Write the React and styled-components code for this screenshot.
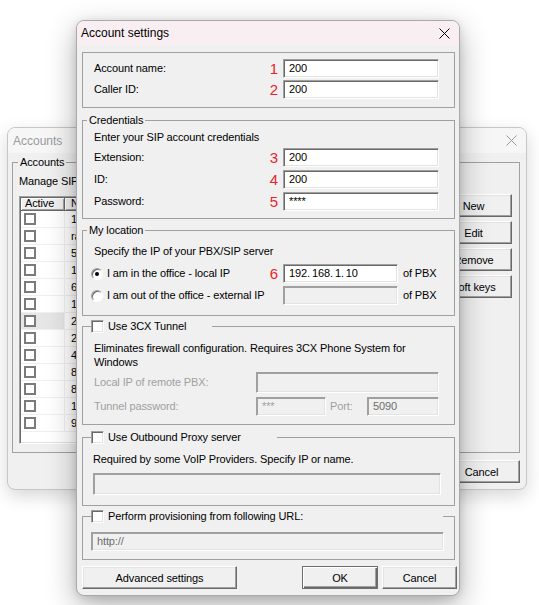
import React from "react";
import styled, { createGlobalStyle } from "styled-components";

const Global = createGlobalStyle`
  html, body { margin: 0; padding: 0; background: #fff; }
  body {
    font-family: "Liberation Sans", Arial, sans-serif;
    font-size: 11px;
    letter-spacing: -0.12px;
    color: #000;
  }
  *, *::before, *::after { box-sizing: border-box; }
`;

const Desktop = styled.div`
  position: relative;
  width: 539px;
  height: 605px;
  overflow: hidden;
  background: #fff;
`;

const Window = styled.div`
  position: absolute;
  left: ${(p) => p.$x}px;
  top: ${(p) => p.$y}px;
  width: ${(p) => p.$w}px;
  height: ${(p) => p.$h}px;
  display: flex;
  flex-direction: column;
  background: #f0f0f0;
  border: 1px solid ${(p) => (p.$active ? "#a9a9a9" : "#c6c6c6")};
  border-radius: 8px;
  overflow: hidden;
  box-shadow: ${(p) =>
    p.$active
      ? "0 10px 30px rgba(0,0,0,0.30), 0 2px 8px rgba(0,0,0,0.12)"
      : "0 6px 18px rgba(0,0,0,0.16)"};
`;

const TitleBar = styled.div`
  flex: none;
  height: ${(p) => p.$h}px;
  display: flex;
  align-items: center;
  justify-content: space-between;
  padding: 0 9px 0 ${(p) => p.$pl}px;
  background: ${(p) => (p.$active ? "#f9eef2" : "#f6f6f6")};
  color: ${(p) => (p.$active ? "#000" : "#9a9a9a")};
  font-size: 12px;
  letter-spacing: 0;
  line-height: 14px;
`;

const CloseIcon = ({ color, size }) => (
  <svg width={size} height={size} viewBox={`0 0 ${size} ${size}`} fill="none">
    <path
      d={`M0.5 0.5 L${size - 0.5} ${size - 0.5} M${size - 0.5} 0.5 L0.5 ${size - 0.5}`}
      stroke={color}
      strokeWidth="1"
    />
  </svg>
);

/* ---------- shared controls ---------- */

const Group = styled.fieldset`
  flex: none;
  margin: ${(p) => p.$mt || 0}px 0 0;
  padding: 0;
  min-width: 0;
  border: 1px solid #a0a0a0;
`;

const Legend = styled.legend`
  padding: 0 2px;
  margin-left: ${(p) => p.$ml ?? 4}px;
  height: 13px;
  line-height: 13px;
  font-size: 11px;
`;

const CheckLegend = styled.legend`
  padding: 0;
  margin-left: 8px;
  width: ${(p) => p.$w}px;
  height: 13px;
`;

const LegendInner = styled.span`
  display: flex;
  align-items: center;
  gap: 4px;
  height: 13px;
  line-height: 13px;
  white-space: nowrap;
`;

const GroupBody = styled.div`
  display: flex;
  flex-direction: column;
  padding: ${(p) => p.$p};
`;

const Text = styled.div`
  line-height: ${(p) => p.$lh || 13}px;
  color: ${(p) => (p.$disabled ? "#a0a0a0" : "#000")};
  margin-bottom: ${(p) => p.$mb || 0}px;
  padding-left: ${(p) => p.$pl || 0}px;
  white-space: nowrap;
`;

const Rows = styled.div`
  display: flex;
  flex-direction: column;
  gap: ${(p) => p.$gap}px;
`;

const FieldRow = styled.div`
  display: flex;
  align-items: center;
  height: ${(p) => p.$h || 19}px;
  margin-top: ${(p) => p.$mt || 0}px;
`;

const Label = styled.span`
  flex: 1;
  line-height: 13px;
  white-space: nowrap;
  color: ${(p) => (p.$disabled ? "#a0a0a0" : "#000")};
`;

const FixedLabel = styled.span`
  flex: none;
  width: ${(p) => p.$w}px;
  margin-left: ${(p) => p.$ml || 0}px;
  line-height: 13px;
  white-space: nowrap;
  color: ${(p) => (p.$disabled ? "#a0a0a0" : "#000")};
`;

const Num = styled.span`
  flex: none;
  margin-right: 5px;
  color: #e8232b;
  font-size: 15px;
  letter-spacing: 0;
  line-height: 15px;
`;

const Edit = styled.div`
  flex: none;
  width: ${(p) => p.$w}px;
  height: 100%;
  display: flex;
  align-items: center;
  padding-left: 5px;
  overflow: hidden;
  white-space: nowrap;
  line-height: 13px;
  background: ${(p) => (p.$disabled ? "#f0f0f0" : "#fff")};
  color: ${(p) => p.$color || "#000"};
  border: 1px solid;
  border-color: #a0a0a0 #fff #fff #a0a0a0;
  box-shadow: inset 1px 1px 0 ${(p) => (p.$disabled ? "#a0a0a0" : "#696969")},
    inset -1px -1px 0 #e3e3e3;
`;

const Dot = styled.span`
  margin-right: 2px;
`;

const CheckBox = styled.span`
  flex: none;
  width: 13px;
  height: 13px;
  background: #fff;
  border: 1px solid;
  border-color: #a0a0a0 #fff #fff #a0a0a0;
  box-shadow: inset 1px 1px 0 #696969, inset -1px -1px 0 #e3e3e3;
`;

const Radio = styled.span`
  position: relative;
  flex: none;
  width: 12px;
  height: 12px;
  margin-right: 4px;
  border-radius: 50%;
  background: #fff;
  border: 1px solid;
  border-color: #a0a0a0 #fff #fff #a0a0a0;
  box-shadow: inset 1px 1px 0 #696969;
  &::after {
    content: "";
    display: ${(p) => (p.$checked ? "block" : "none")};
    position: absolute;
    left: 3px;
    top: 3px;
    width: 4px;
    height: 4px;
    border-radius: 50%;
    background: #000;
  }
`;

const Button = styled.button`
  flex: none;
  width: ${(p) => p.$w}px;
  height: 23px;
  padding: 0;
  font-family: inherit;
  font-size: 11px;
  letter-spacing: inherit;
  color: #000;
  background: #f0f0f0;
  white-space: nowrap;
  overflow: hidden;
  border: 1px solid;
  border-color: ${(p) => (p.$default ? "#6d6d6d" : "#fff #696969 #696969 #fff")};
  box-shadow: ${(p) =>
    p.$default
      ? "inset 1px 1px 0 #fff, inset -1px -1px 0 #696969, inset -2px -2px 0 #a0a0a0"
      : "inset -1px -1px 0 #a0a0a0, inset 1px 1px 0 #e3e3e3"};
`;

/* ---------- account settings dialog ---------- */

const DialogBody = styled.div`
  flex: 1;
  display: flex;
  flex-direction: column;
  padding: 7px 4px 6px 5px;
`;

const ButtonRow = styled.div`
  display: flex;
  align-items: center;
  gap: 4px;
  margin: ${(p) => p.$mt}px ${(p) => p.$mr || 0}px 0 0;
  justify-content: ${(p) => p.$justify || "flex-start"};
`;

const Spacer = styled.span`
  flex: 1;
`;

const IpValue = ({ value }) => {
  const parts = value.split(".");
  return (
    <span>
      {parts.map((part, i) => (
        <React.Fragment key={i}>
          {part}
          {i < parts.length - 1 && <Dot>.</Dot>}
        </React.Fragment>
      ))}
    </span>
  );
};

function AccountSettings() {
  return (
    <Window $active $x={76} $y={20} $w={384} $h={576}>
      <TitleBar $active $h={24} $pl={4}>
        <span>Account settings</span>
        <CloseIcon color="#000" size={11} />
      </TitleBar>
      <DialogBody>
        <Group>
          <GroupBody $p="6px 15px 8px 11px">
            <Rows $gap={2}>
              <FieldRow>
                <Label>Account name:</Label>
                <Num>1</Num>
                <Edit $w={156}>200</Edit>
              </FieldRow>
              <FieldRow>
                <Label>Caller ID:</Label>
                <Num>2</Num>
                <Edit $w={156}>200</Edit>
              </FieldRow>
            </Rows>
          </GroupBody>
        </Group>

        <Group $mt={6}>
          <Legend>Credentials</Legend>
          <GroupBody $p="4px 15px 7px 11px">
            <Text $mb={4}>Enter your SIP account credentials</Text>
            <Rows $gap={3}>
              <FieldRow>
                <Label>Extension:</Label>
                <Num>3</Num>
                <Edit $w={156}>200</Edit>
              </FieldRow>
              <FieldRow>
                <Label>ID:</Label>
                <Num>4</Num>
                <Edit $w={156}>200</Edit>
              </FieldRow>
              <FieldRow>
                <Label>Password:</Label>
                <Num>5</Num>
                <Edit $w={156}>****</Edit>
              </FieldRow>
            </Rows>
          </GroupBody>
        </Group>

        <Group $mt={5}>
          <Legend>My location</Legend>
          <GroupBody $p="8px 10px 10px 8px">
            <Text $mb={6} $pl={3}>
              Specify the IP of your PBX/SIP server
            </Text>
            <Rows $gap={3}>
              <FieldRow>
                <Radio $checked />
                <Label>I am in the office - local IP</Label>
                <Num>6</Num>
                <Edit $w={115}>
                  <IpValue value="192.168.1.10" />
                </Edit>
                <FixedLabel $w={41} $ml={5}>
                  of PBX
                </FixedLabel>
              </FieldRow>
              <FieldRow>
                <Radio />
                <Label>I am out of the office - external IP</Label>
                <Edit $w={115} $disabled />
                <FixedLabel $w={41} $ml={5}>
                  of PBX
                </FixedLabel>
              </FieldRow>
            </Rows>
          </GroupBody>
        </Group>

        <Group $mt={4}>
          <CheckLegend $w={121}>
            <LegendInner>
              <CheckBox />
              Use 3CX Tunnel
            </LegendInner>
          </CheckLegend>
          <GroupBody $p="8px 15px 8px 11px">
            <Text $lh={14} $mb={3}>
              Eliminates firewall configuration. Requires 3CX Phone System for
              <br />
              Windows
            </Text>
            <FieldRow $h={21}>
              <Label $disabled>Local IP of remote PBX:</Label>
              <Edit $w={183} $disabled />
            </FieldRow>
            <FieldRow $mt={4}>
              <FixedLabel $w={162} $disabled>
                Tunnel password:
              </FixedLabel>
              <Edit $w={70} $disabled $color="#a0a0a0">
                ***
              </Edit>
              <FixedLabel $w={37} $ml={4} $disabled>
                Port:
              </FixedLabel>
              <Edit $w={72} $disabled $color="#6d6d6d">
                5090
              </Edit>
            </FieldRow>
          </GroupBody>
        </Group>

        <Group $mt={6}>
          <CheckLegend $w={186}>
            <LegendInner>
              <CheckBox />
              Use Outbound Proxy server
            </LegendInner>
          </CheckLegend>
          <GroupBody $p="9px 13px 10px 10px">
            <Text $mb={7}>Required by some VoIP Providers. Specify IP or name.</Text>
            <FieldRow $h={22}>
              <Edit $w={348} $disabled />
            </FieldRow>
          </GroupBody>
        </Group>

        <Group $mt={4}>
          <CheckLegend $w={352}>
            <LegendInner>
              <CheckBox />
              Perform provisioning from following URL:
            </LegendInner>
          </CheckLegend>
          <GroupBody $p="9px 10px 8px 8px">
            <FieldRow>
              <Edit $w={353} $disabled $color="#6d6d6d">
                http://
              </Edit>
            </FieldRow>
          </GroupBody>
        </Group>

        <ButtonRow $mt={6} $mr={-2}>
          <Button $w={155}>Advanced settings</Button>
          <Spacer />
          <Button $w={76} $default>
            OK
          </Button>
          <Button $w={75}>Cancel</Button>
        </ButtonRow>
      </DialogBody>
    </Window>
  );
}

/* ---------- accounts window (behind) ---------- */

const AccountsBody = styled.div`
  flex: 1;
  display: flex;
  flex-direction: column;
  padding: 3px 6px 6px 4px;
`;

const ListArea = styled.div`
  display: flex;
  align-items: flex-start;
  gap: 6px;
`;

const ListView = styled.div`
  flex: none;
  width: 410px;
  height: 248px;
  display: flex;
  flex-direction: column;
  padding: 1px;
  overflow: hidden;
  background: #fff;
  border: 1px solid;
  border-color: #a0a0a0 #fff #fff #a0a0a0;
  box-shadow: inset 1px 1px 0 #696969, inset -1px -1px 0 #e3e3e3;
`;

const HeaderRow = styled.div`
  flex: none;
  display: flex;
  height: 13px;
`;

const HeaderCell = styled.div`
  flex: ${(p) => (p.$w ? "none" : 1)};
  width: ${(p) => (p.$w ? `${p.$w}px` : "auto")};
  padding-left: ${(p) => p.$pl}px;
  line-height: 11px;
  background: #f0f0f0;
  border-right: 1px solid #696969;
  border-bottom: 1px solid #696969;
  box-shadow: inset 1px 1px 0 #fff, inset -1px -1px 0 #a0a0a0;
  white-space: nowrap;
`;

const ListRow = styled.div`
  flex: none;
  display: flex;
  height: 17px;
  border-bottom: 1px solid #f0f0f0;
`;

const CheckCell = styled.div`
  flex: none;
  width: 44px;
  display: flex;
  align-items: center;
  padding-left: 3px;
  border-right: 1px solid #f0f0f0;
  background: ${(p) => (p.$hover ? "#e6e6e6" : "transparent")};
`;

const NameCell = styled.div`
  flex: 1;
  display: flex;
  align-items: center;
  padding-left: 6px;
  white-space: nowrap;
`;

const ListCheck = styled.span`
  width: 12px;
  height: 12px;
  background: #fff;
  border: 2px solid #7b7b7b;
`;

const ButtonColumn = styled.div`
  display: flex;
  flex-direction: column;
  gap: 4px;
  margin-top: -2px;
`;

const accounts = ["10", "ra", "50", "11", "60", "12", "20", "21", "40", "80", "81", "13", "90"];

function AccountsWindow() {
  return (
    <Window $x={7} $y={127} $w={520} $h={363}>
      <TitleBar $h={25} $pl={5}>
        <span>Accounts</span>
        <CloseIcon color="#9a9a9a" size={11} />
      </TitleBar>
      <AccountsBody>
        <Group>
          <Legend $ml={5}>Accounts</Legend>
          <GroupBody $p="6px 7px 8px 6px">
            <Text $mb={8}>Manage SIP</Text>
            <ListArea>
              <ListView>
                <HeaderRow>
                  <HeaderCell $w={44} $pl={4}>
                    Active
                  </HeaderCell>
                  <HeaderCell $pl={6}>No</HeaderCell>
                </HeaderRow>
                {accounts.map((name, i) => (
                  <ListRow key={i}>
                    <CheckCell $hover={i === 6}>
                      <ListCheck />
                    </CheckCell>
                    <NameCell>{name}</NameCell>
                  </ListRow>
                ))}
              </ListView>
              <ButtonColumn>
                <Button $w={77}>New</Button>
                <Button $w={77}>Edit</Button>
                <Button $w={77}>Remove</Button>
                <Button $w={77}>Soft keys</Button>
              </ButtonColumn>
            </ListArea>
          </GroupBody>
        </Group>
        <ButtonRow $mt={7} $justify="flex-end">
          <Button $w={77}>Cancel</Button>
        </ButtonRow>
      </AccountsBody>
    </Window>
  );
}

export default function App() {
  return (
    <>
      <Global />
      <Desktop>
        <AccountsWindow />
        <AccountSettings />
      </Desktop>
    </>
  );
}
